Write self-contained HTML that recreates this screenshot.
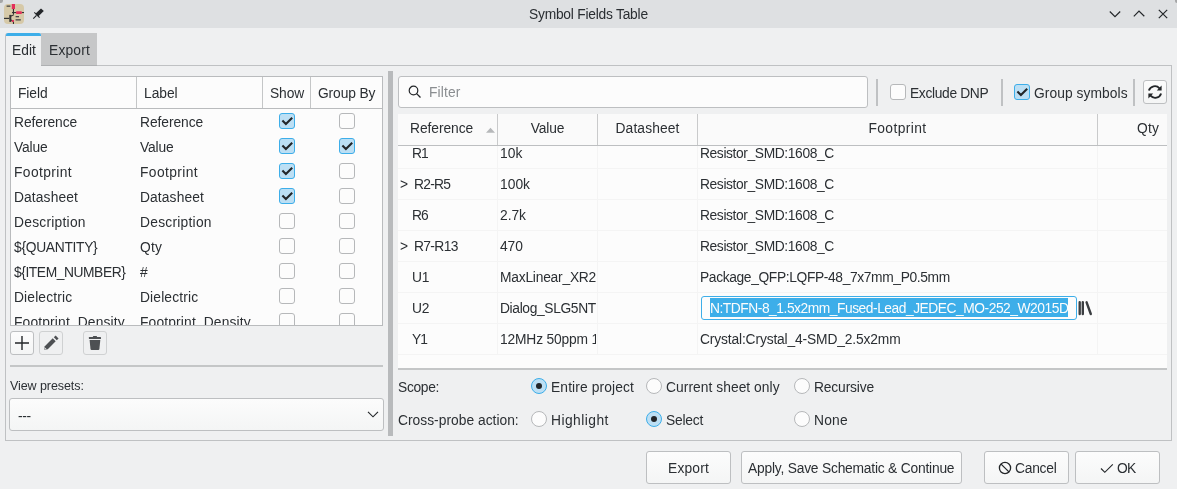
<!DOCTYPE html>
<html><head><meta charset="utf-8">
<style>
*{box-sizing:border-box;margin:0;padding:0}
html,body{will-change:transform;width:1177px;height:489px;overflow:hidden;background:#eff0f1;font-family:"Liberation Sans",sans-serif;font-size:13.8px;color:#2b2f33}
.a{position:absolute}
.t{position:absolute;white-space:nowrap;line-height:16px}
.cb{position:absolute;width:16px;height:16px;border:1px solid #b6b8ba;border-radius:3px;background:#fcfcfc}
.cb.on{background:#bcdff4;border-color:#3daee9}
.cb svg{position:absolute;left:-1px;top:-1px}
.btn{position:absolute;border:1px solid #bdbfc1;border-radius:3px;background:linear-gradient(#fcfcfc,#f4f5f5)}
.rad{position:absolute;width:16px;height:16px;border:1px solid #b6b8ba;border-radius:50%;background:#fcfcfc}
.rad.on{background:#bcdff4;border-color:#3daee9}
.rad.on::after{content:"";position:absolute;left:4px;top:4px;width:6px;height:6px;border-radius:50%;background:#232629}
</style></head><body>

<div class="a" style="left:0;top:0;width:1177px;height:28px;background:#dee0e2"></div>
<div class="t" style="left:529px;top:6.5px;letter-spacing:-0.231px;color:#2a2e32">Symbol Fields Table</div>
<svg class="a" style="left:4px;top:4px" width="20" height="20" viewBox="0 0 20 20">
<rect x="0" y="0" width="20" height="20" rx="4" fill="#d6c9a8"/>
<rect x="2.6" y="1.5" width="3.8" height="1.3" fill="#454545"/>
<rect x="7.8" y="0" width="3.2" height="5.1" fill="#e4305c"/>
<rect x="8.9" y="5" width="1.1" height="5.5" fill="#333"/>
<rect x="8" y="8" width="4" height="1.1" fill="#333"/>
<rect x="12" y="7.3" width="5.9" height="2.7" rx="0.8" fill="#e4305c"/>
<rect x="17.9" y="8" width="2.1" height="1.1" fill="#333"/>
<path d="M9.4 10.4 L9.4 11 L6.6 12.3" stroke="#333" fill="none" stroke-width="1.1"/>
<rect x="5.3" y="10.9" width="2" height="7" fill="#333"/>
<rect x="0" y="13.8" width="5.3" height="1.2" fill="#333"/>
<path d="M7 16 L9 17" stroke="#333" stroke-width="1.1"/>
<rect x="7.8" y="15.9" width="2.2" height="2" rx="0.6" fill="#e4305c"/>
<rect x="8.9" y="17.9" width="1.1" height="2.1" fill="#333"/>
<rect x="11.6" y="12" width="3.4" height="1.3" fill="#454545"/>
<rect x="11.6" y="15.2" width="5.2" height="1.3" fill="#454545"/>
</svg>
<svg class="a" style="left:30px;top:4px" width="18" height="18" viewBox="0 0 18 18">
<path d="M11 4.4 L13.8 7.1 L8.2 12.6 L5.4 9.8 Z" fill="#232629"/>
<path d="M4.3 8.3 L9.6 13.6" stroke="#232629" stroke-width="1.1"/>
<path d="M3.3 14.6 L6.5 11.4" stroke="#232629" stroke-width="1.2"/>
</svg>
<svg class="a" style="left:1100px;top:0px" width="77" height="28" viewBox="0 0 77 28">
<path d="M9.8 11.5 L15 16.6 L20.2 11.5" fill="none" stroke="#232629" stroke-width="1.2"/>
<path d="M33.8 16.3 L39 11.1 L44.3 16.3" fill="none" stroke="#232629" stroke-width="1.2"/>
<path d="M58.8 9.8 L67.2 18.2 M67.2 9.8 L58.8 18.2" fill="none" stroke="#232629" stroke-width="1.2"/>
</svg>
<div class="a" style="left:-2px;top:-2px;width:4.5px;height:4.5px;border-radius:50%;background:#a5a6a7"></div>
<div class="a" style="left:1174.5px;top:-2px;width:4.5px;height:4.5px;border-radius:50%;background:#a5a6a7"></div>
<div class="a" style="left:5px;top:65px;width:1167px;height:376px;border:1px solid #bfc1c3;background:#eff0f1"></div>
<div class="a" style="left:5px;top:33px;width:37px;height:33px;background:#eff0f1;border-left:1px solid #bfc1c3;border-right:1px solid #bfc1c3;border-radius:3px 3px 0 0"></div>
<div class="a" style="left:6px;top:33px;width:35px;height:3px;background:#3daee9;border-radius:2px 2px 0 0"></div>
<div class="t" style="left:12px;top:42.5px;letter-spacing:0.020px;">Edit</div>
<div class="a" style="left:41px;top:33px;width:56px;height:33px;background:#c6c7c8;border-bottom:1px solid #aeb0b2"></div>
<div class="t" style="left:49px;top:42.5px;letter-spacing:0.193px;">Export</div>
<div class="a" style="left:10px;top:76px;width:373px;height:250px;border:1px solid #b9bbbd;background:#fcfcfc;overflow:hidden">
<div class="a" style="left:0;top:0;width:371px;height:32px;background:#fcfcfc;border-bottom:1px solid #b9bbbd"></div>
<div class="a" style="left:125px;top:0;width:1px;height:31px;background:#c4c6c7"></div>
<div class="a" style="left:251px;top:0;width:1px;height:31px;background:#c4c6c7"></div>
<div class="a" style="left:299px;top:0;width:1px;height:31px;background:#c4c6c7"></div>
</div>
<div class="t" style="left:18px;top:85.5px;letter-spacing:-0.080px;">Field</div>
<div class="t" style="left:144px;top:85.5px;letter-spacing:-0.029px;">Label</div>
<div class="t" style="left:270px;top:85.5px;letter-spacing:-0.106px;">Show</div>
<div class="t" style="left:318px;top:85.5px;letter-spacing:-0.115px;">Group By</div>
<div class="a" style="left:11px;top:109px;width:371px;height:216px;overflow:hidden">
<div class="t" style="left:3px;top:5.5px;letter-spacing:-0.064px;">Reference</div>
<div class="t" style="left:129px;top:5.5px;letter-spacing:-0.064px;">Reference</div>
<div class="cb on" style="left:268px;top:4px"><svg width="16" height="16" viewBox="0 0 16 16"><path d="M3.4 7.6 L6.9 11.1 L13.2 4.8" fill="none" stroke="#232629" stroke-width="2.1"/></svg></div>
<div class="cb" style="left:328px;top:4px"></div>
<div class="t" style="left:3px;top:30.5px;letter-spacing:-0.125px;">Value</div>
<div class="t" style="left:129px;top:30.5px;letter-spacing:-0.125px;">Value</div>
<div class="cb on" style="left:268px;top:29px"><svg width="16" height="16" viewBox="0 0 16 16"><path d="M3.4 7.6 L6.9 11.1 L13.2 4.8" fill="none" stroke="#232629" stroke-width="2.1"/></svg></div>
<div class="cb on" style="left:328px;top:29px"><svg width="16" height="16" viewBox="0 0 16 16"><path d="M3.4 7.6 L6.9 11.1 L13.2 4.8" fill="none" stroke="#232629" stroke-width="2.1"/></svg></div>
<div class="t" style="left:3px;top:55.5px;letter-spacing:0.399px;">Footprint</div>
<div class="t" style="left:129px;top:55.5px;letter-spacing:0.399px;">Footprint</div>
<div class="cb on" style="left:268px;top:54px"><svg width="16" height="16" viewBox="0 0 16 16"><path d="M3.4 7.6 L6.9 11.1 L13.2 4.8" fill="none" stroke="#232629" stroke-width="2.1"/></svg></div>
<div class="cb" style="left:328px;top:54px"></div>
<div class="t" style="left:3px;top:80.5px;letter-spacing:0.118px;">Datasheet</div>
<div class="t" style="left:129px;top:80.5px;letter-spacing:0.118px;">Datasheet</div>
<div class="cb on" style="left:268px;top:79px"><svg width="16" height="16" viewBox="0 0 16 16"><path d="M3.4 7.6 L6.9 11.1 L13.2 4.8" fill="none" stroke="#232629" stroke-width="2.1"/></svg></div>
<div class="cb" style="left:328px;top:79px"></div>
<div class="t" style="left:3px;top:105.5px;letter-spacing:0.246px;">Description</div>
<div class="t" style="left:129px;top:105.5px;letter-spacing:0.246px;">Description</div>
<div class="cb" style="left:268px;top:104px"></div>
<div class="cb" style="left:328px;top:104px"></div>
<div class="t" style="left:3px;top:130.5px;letter-spacing:-0.292px;">${QUANTITY}</div>
<div class="t" style="left:129px;top:130.5px;letter-spacing:0.184px;">Qty</div>
<div class="cb" style="left:268px;top:129px"></div>
<div class="cb" style="left:328px;top:129px"></div>
<div class="t" style="left:3px;top:155.5px;letter-spacing:-0.421px;">${ITEM_NUMBER}</div>
<div class="t" style="left:129px;top:155.5px;">#</div>
<div class="cb" style="left:268px;top:154px"></div>
<div class="cb" style="left:328px;top:154px"></div>
<div class="t" style="left:3px;top:180.5px;letter-spacing:0.146px;">Dielectric</div>
<div class="t" style="left:129px;top:180.5px;letter-spacing:0.146px;">Dielectric</div>
<div class="cb" style="left:268px;top:179px"></div>
<div class="cb" style="left:328px;top:179px"></div>
<div class="t" style="left:3px;top:205.5px;letter-spacing:0.161px;">Footprint_Density</div>
<div class="t" style="left:129px;top:205.5px;letter-spacing:0.161px;">Footprint_Density</div>
<div class="cb" style="left:268px;top:204px"></div>
<div class="cb" style="left:328px;top:204px"></div>
</div>
<div class="btn" style="left:10px;top:331px;width:24px;height:24px"></div>
<svg class="a" style="left:10px;top:331px" width="24" height="24" viewBox="0 0 24 24"><path d="M12 5V19M5 12H19" stroke="#232629" stroke-width="1.4"/></svg>
<div class="a" style="left:39px;top:331px;width:24px;height:24px;border:1px solid #cfd1d2;border-radius:3px"></div>
<svg class="a" style="left:39px;top:331px" width="24" height="24" viewBox="0 0 24 24"><path d="M5.2 18.8 L5.82 15.22 L13.72 7.32 L16.68 10.28 L8.78 18.18 Z" fill="#4d5053"/><path d="M14.82 6.22 L16.62 4.42 L19.58 7.38 L17.78 9.18 Z" fill="#4d5053"/><path d="M5.5 18.5 L5.9 16.5 L7.5 18.1 Z" fill="#e6e6e6"/></svg>
<div class="a" style="left:83px;top:331px;width:24px;height:24px;border:1px solid #cfd1d2;border-radius:3px"></div>
<svg class="a" style="left:83px;top:331px" width="24" height="24" viewBox="0 0 24 24"><rect x="5.9" y="6" width="12.1" height="1.9" rx="0.5" fill="#4d5053"/><rect x="9.9" y="4.9" width="4.1" height="1.5" rx="0.6" fill="#4d5053"/><path d="M6.6 9 H17.3 L16.4 18 Q16.3 18.9 15.4 18.9 H8.5 Q7.6 18.9 7.5 18 Z" fill="#4d5053"/></svg>
<div class="a" style="left:10px;top:365px;width:373px;height:2px;background:#c4c6c7"></div>
<div class="t" style="left:10px;top:377.5px;font-size:12.5px;letter-spacing:-0.079px;">View presets:</div>
<div class="btn" style="left:9px;top:398px;width:375px;height:33px"></div>
<div class="t" style="left:18px;top:408.5px;letter-spacing:-0.303px;">---</div>
<svg class="a" style="left:366px;top:409px" width="14" height="11" viewBox="0 0 14 11"><path d="M2 2.8 L7 7.8 L12 2.8" fill="none" stroke="#232629" stroke-width="1.15"/></svg>
<div class="a" style="left:388px;top:71px;width:5px;height:365px;background:#b8babc"></div>
<div class="a" style="left:398px;top:76px;width:470px;height:32px;border:1px solid #bdbfc1;border-radius:3px;background:#fcfcfc"></div>
<svg class="a" style="left:406px;top:84px" width="16" height="16" viewBox="0 0 16 16"><circle cx="7.5" cy="6.5" r="4.3" fill="none" stroke="#232629" stroke-width="1.2"/><path d="M10.6 9.6 L14.5 13.5" stroke="#232629" stroke-width="1.3"/></svg>
<div class="t" style="left:429px;top:84.5px;letter-spacing:0.161px;color:#8a8d90">Filter</div>
<div class="a" style="left:876px;top:79px;width:2px;height:27px;background:#bfc1c3"></div>
<div class="a" style="left:1001px;top:79px;width:2px;height:27px;background:#bfc1c3"></div>
<div class="a" style="left:1133px;top:79px;width:2px;height:27px;background:#bfc1c3"></div>
<div class="cb" style="left:890px;top:84px"></div>
<div class="t" style="left:910px;top:85.5px;letter-spacing:-0.335px;">Exclude DNP</div>
<div class="cb on" style="left:1014px;top:84px"><svg width="16" height="16" viewBox="0 0 16 16"><path d="M3.4 7.6 L6.9 11.1 L13.2 4.8" fill="none" stroke="#232629" stroke-width="2.1"/></svg></div>
<div class="t" style="left:1034px;top:85.5px;letter-spacing:0.065px;">Group symbols</div>
<div class="btn" style="left:1143px;top:80px;width:24px;height:24px"></div>
<svg class="a" style="left:1143px;top:80px" width="24" height="24" viewBox="0 0 24 24"><path d="M5.9 10.6 A6.2 6.2 0 0 1 16.5 8.3" fill="none" stroke="#232629" stroke-width="1.9"/><path d="M18.1 13.4 A6.2 6.2 0 0 1 7.5 15.7" fill="none" stroke="#232629" stroke-width="1.9"/><path d="M18.6 5.6 L18.6 10.6 L13.8 10.6Z" fill="#232629"/><path d="M5.4 18.4 L5.4 13.4 L10.2 13.4Z" fill="#232629"/></svg>
<div class="a" style="left:398px;top:114px;width:769px;height:255px;background:#fcfcfc;overflow:hidden">
<div class="a" style="left:0;top:0;width:769px;height:32px;background:#fafafa;border-bottom:1px solid #bdbfc1"></div>
<div class="a" style="left:99px;top:0;width:1px;height:31px;background:#c9cacb"></div>
<div class="a" style="left:99px;top:32px;width:1px;height:208px;background:#f4f4f4"></div>
<div class="a" style="left:199px;top:0;width:1px;height:31px;background:#c9cacb"></div>
<div class="a" style="left:199px;top:32px;width:1px;height:208px;background:#f4f4f4"></div>
<div class="a" style="left:299px;top:0;width:1px;height:31px;background:#c9cacb"></div>
<div class="a" style="left:299px;top:32px;width:1px;height:208px;background:#f4f4f4"></div>
<div class="a" style="left:699px;top:0;width:1px;height:31px;background:#c9cacb"></div>
<div class="a" style="left:699px;top:32px;width:1px;height:208px;background:#f4f4f4"></div>
</div>
<div class="t" style="left:410px;top:120.5px;letter-spacing:-0.064px;">Reference</div>
<svg class="a" style="left:485px;top:126px" width="12" height="8" viewBox="0 0 12 8"><path d="M1 6.8 L5.5 1.8 L10 6.8Z" fill="#b6b8ba"/></svg>
<div class="a" style="left:397.5px;top:0;width:300px;text-align:center">

<div class="t" style="left:0px;top:120.5px;letter-spacing:-0.125px;position:relative;display:inline-block;left:auto;">Value</div>
</div>
<div class="a" style="left:497.5px;top:0;width:300px;text-align:center">

<div class="t" style="left:0px;top:120.5px;letter-spacing:0.118px;position:relative;display:inline-block;left:auto;">Datasheet</div>
</div>
<div class="a" style="left:747.5px;top:0;width:300px;text-align:center">

<div class="t" style="left:0px;top:120.5px;letter-spacing:0.399px;position:relative;display:inline-block;left:auto;">Footprint</div>
</div>
<div class="t" style="left:1137px;top:120.5px;letter-spacing:0.184px;">Qty</div>
<div class="t" style="left:412px;top:145.5px;letter-spacing:-0.862px;">R1</div>
<div class="a" style="left:500px;top:144px;width:96px;height:24px;overflow:hidden">
<div class="t" style="left:0px;top:1.5px;letter-spacing:0.039px;">10k</div>
</div>
<div class="t" style="left:700px;top:145.5px;letter-spacing:-0.382px;">Resistor_SMD:1608_C</div>

<div class="t" style="left:400px;top:176.5px;">&gt;</div>
<div class="t" style="left:414px;top:176.5px;letter-spacing:-0.751px;">R2-R5</div>
<div class="a" style="left:500px;top:175px;width:96px;height:24px;overflow:hidden">
<div class="t" style="left:0px;top:1.5px;letter-spacing:0.017px;">100k</div>
</div>
<div class="t" style="left:700px;top:176.5px;letter-spacing:-0.382px;">Resistor_SMD:1608_C</div>
<div class="a" style="left:398px;top:168px;width:769px;height:1px;background:#f4f4f4"></div>
<div class="t" style="left:412px;top:207.5px;letter-spacing:-0.862px;">R6</div>
<div class="a" style="left:500px;top:206px;width:96px;height:24px;overflow:hidden">
<div class="t" style="left:0px;top:1.5px;letter-spacing:-0.036px;">2.7k</div>
</div>
<div class="t" style="left:700px;top:207.5px;letter-spacing:-0.382px;">Resistor_SMD:1608_C</div>
<div class="a" style="left:398px;top:199px;width:769px;height:1px;background:#f4f4f4"></div>
<div class="t" style="left:400px;top:238.5px;">&gt;</div>
<div class="t" style="left:414px;top:238.5px;letter-spacing:-0.634px;">R7-R13</div>
<div class="a" style="left:500px;top:237px;width:96px;height:24px;overflow:hidden">
<div class="t" style="left:0px;top:1.5px;letter-spacing:-0.050px;">470</div>
</div>
<div class="t" style="left:700px;top:238.5px;letter-spacing:-0.382px;">Resistor_SMD:1608_C</div>
<div class="a" style="left:398px;top:230px;width:769px;height:1px;background:#f4f4f4"></div>
<div class="t" style="left:412px;top:269.5px;letter-spacing:-0.136px;">U1</div>
<div class="a" style="left:500px;top:268px;width:96px;height:24px;overflow:hidden">
<div class="t" style="left:0px;top:1.5px;letter-spacing:-0.221px;">MaxLinear_XR21V1410IL16</div>
</div>
<div class="t" style="left:700px;top:269.5px;letter-spacing:-0.363px;">Package_QFP:LQFP-48_7x7mm_P0.5mm</div>
<div class="a" style="left:398px;top:261px;width:769px;height:1px;background:#f4f4f4"></div>
<div class="t" style="left:412px;top:300.5px;letter-spacing:-0.136px;">U2</div>
<div class="a" style="left:500px;top:299px;width:96px;height:24px;overflow:hidden">
<div class="t" style="left:0px;top:1.5px;letter-spacing:-0.358px;">Dialog_SLG5NT1668V</div>
</div>
<div class="a" style="left:398px;top:292px;width:769px;height:1px;background:#f4f4f4"></div>
<div class="t" style="left:412px;top:331.5px;letter-spacing:-0.855px;">Y1</div>
<div class="a" style="left:500px;top:330px;width:96px;height:24px;overflow:hidden">
<div class="t" style="left:0px;top:1.5px;letter-spacing:-0.167px;">12MHz 50ppm 12pF</div>
</div>
<div class="t" style="left:700px;top:331.5px;letter-spacing:-0.144px;">Crystal:Crystal_4-SMD_2.5x2mm</div>
<div class="a" style="left:398px;top:323px;width:769px;height:1px;background:#f4f4f4"></div>
<div class="a" style="left:398px;top:168px;width:769px;height:1px;background:#f4f4f4"></div>
<div class="a" style="left:398px;top:199px;width:769px;height:1px;background:#f4f4f4"></div>
<div class="a" style="left:398px;top:230px;width:769px;height:1px;background:#f4f4f4"></div>
<div class="a" style="left:398px;top:261px;width:769px;height:1px;background:#f4f4f4"></div>
<div class="a" style="left:398px;top:292px;width:769px;height:1px;background:#f4f4f4"></div>
<div class="a" style="left:398px;top:323px;width:769px;height:1px;background:#f4f4f4"></div>
<div class="a" style="left:398px;top:354px;width:769px;height:1px;background:#f4f4f4"></div>
<div class="a" style="left:701px;top:296px;width:376px;height:24px;border:1px solid #3daee9;border-radius:3px;background:#fcfcfc"></div>
<div class="a" style="left:710px;top:298px;width:358px;height:19px;background:#3daee9"></div>
<div class="t" style="left:710px;top:300.5px;letter-spacing:-0.467px;color:#fcfcfc">N:TDFN-8_1.5x2mm_Fused-Lead_JEDEC_MO-252_W2015D</div>
<svg class="a" style="left:1077px;top:300px" width="16" height="16" viewBox="0 0 16 16"><path d="M2.7 2.3V14M5.8 2.3V14M9.6 2.3L13.8 14" stroke="#3b3e41" stroke-width="2.4" stroke-linecap="round"/></svg>
<div class="a" style="left:398px;top:368px;width:769px;height:2px;background:#c4c6c7"></div>
<div class="t" style="left:398px;top:379.5px;letter-spacing:-0.316px;">Scope:</div>
<div class="rad on" style="left:531px;top:378px"></div>
<div class="t" style="left:551px;top:379.5px;letter-spacing:0.125px;">Entire project</div>
<div class="rad" style="left:646px;top:378px"></div>
<div class="t" style="left:666px;top:379.5px;letter-spacing:0.050px;">Current sheet only</div>
<div class="rad" style="left:794px;top:378px"></div>
<div class="t" style="left:814px;top:379.5px;letter-spacing:-0.143px;">Recursive</div>
<div class="t" style="left:398px;top:412.5px;letter-spacing:0.017px;">Cross-probe action:</div>
<div class="rad" style="left:531px;top:411px"></div>
<div class="t" style="left:551px;top:412.5px;letter-spacing:0.465px;">Highlight</div>
<div class="rad on" style="left:646px;top:411px"></div>
<div class="t" style="left:666px;top:412.5px;letter-spacing:-0.225px;">Select</div>
<div class="rad" style="left:794px;top:411px"></div>
<div class="t" style="left:814px;top:412.5px;letter-spacing:0.240px;">None</div>
<div class="btn" style="left:646px;top:451px;width:85px;height:33px"></div>
<div class="t" style="left:668px;top:460.5px;letter-spacing:0.193px;">Export</div>
<div class="btn" style="left:741px;top:451px;width:221px;height:33px"></div>
<div class="t" style="left:748px;top:460.5px;letter-spacing:-0.207px;">Apply, Save Schematic &amp; Continue</div>
<div class="btn" style="left:984px;top:451px;width:85px;height:33px"></div>
<svg class="a" style="left:997px;top:460px" width="16" height="16" viewBox="0 0 16 16"><circle cx="8" cy="8" r="5.6" fill="none" stroke="#232629" stroke-width="1.3"/><path d="M4.1 4.1 L11.9 11.9" stroke="#232629" stroke-width="1.3"/></svg>
<div class="t" style="left:1015px;top:460.5px;letter-spacing:-0.243px;">Cancel</div>
<div class="btn" style="left:1075px;top:451px;width:85px;height:33px"></div>
<svg class="a" style="left:1099px;top:460px" width="16" height="16" viewBox="0 0 16 16"><path d="M2 8.5 L5.8 12.3 L13.8 4.3" fill="none" stroke="#232629" stroke-width="1.15"/></svg>
<div class="t" style="left:1117px;top:460.5px;letter-spacing:-0.638px;">OK</div>
</body></html>
